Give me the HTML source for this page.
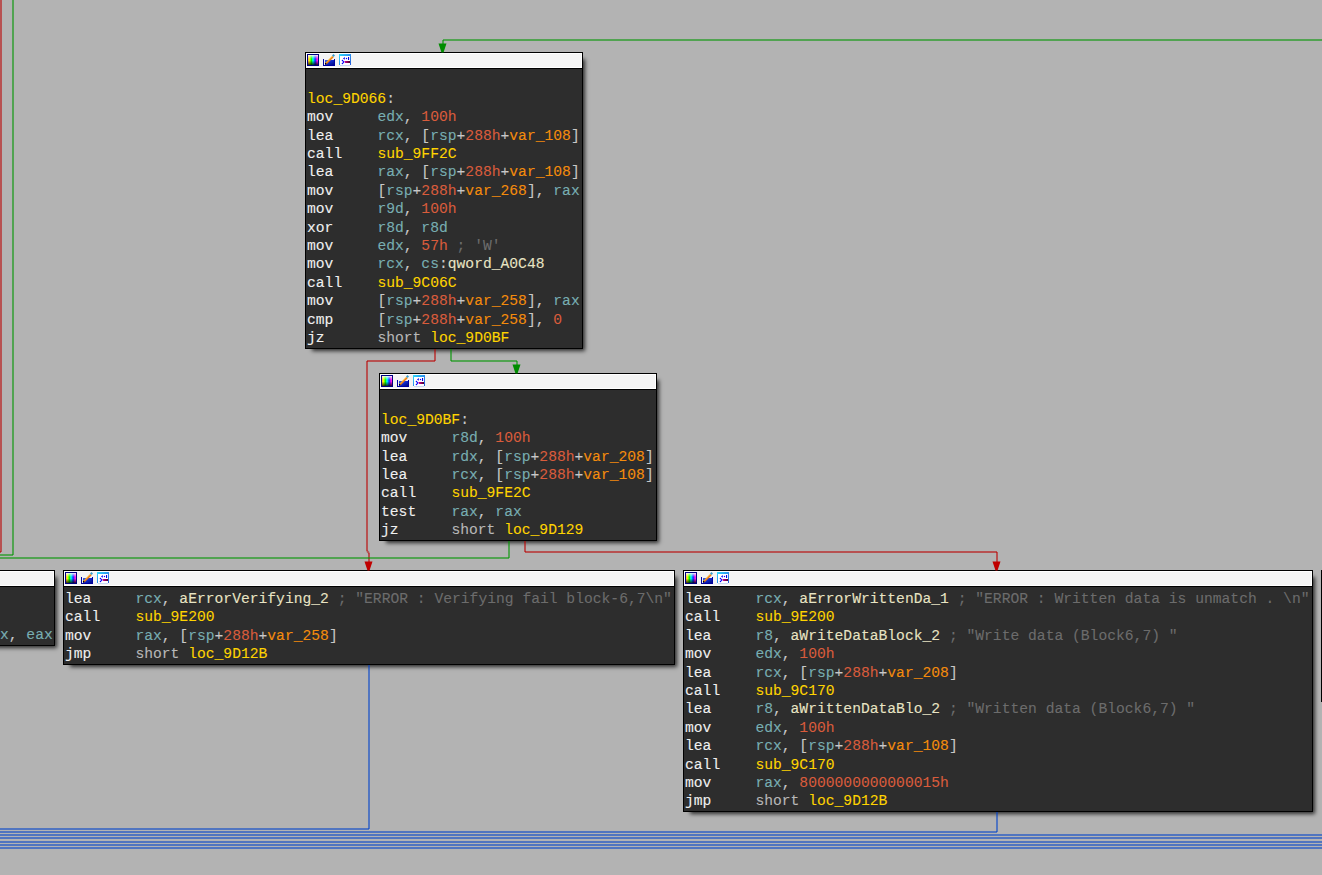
<!DOCTYPE html><html><head><meta charset="utf-8"><style>
html,body{margin:0;padding:0}
body{width:1322px;height:875px;background:#b3b3b3;position:relative;overflow:hidden}
.e{position:absolute}
.eg{background:rgba(0,150,0,0.55)}
.er{background:rgba(185,0,0,0.55)}
.eb{background:rgba(0,65,203,0.55)}
.sl{stroke-width:2}
line.er{stroke:rgba(185,0,0,0.55)}
.ar{position:absolute;overflow:visible}
.nd{position:absolute;box-sizing:border-box;border:1px solid #000;background:#2d2d2d;box-shadow:4.5px 4.5px 4px -2.5px rgba(0,0,0,0.75)}
.tt{height:16px;box-sizing:border-box;background:#f4f4f4;border-bottom:1px solid #000;box-shadow:inset 0 0 0 1px #fff;position:relative}
.ic{position:absolute;left:0px;top:0px}
.bd{margin:0;padding:0 0 0 1px;font-family:"Liberation Mono",monospace;font-size:14.667px;line-height:18.4px;color:#f0f0f0;white-space:pre;position:relative;top:2.4px;-webkit-text-stroke:0.1px currentColor}
i{font-style:normal}
.m{color:#f0f0f0}.r{color:#78aeb2}.n{color:#d95c3c}.v{color:#f48c0c}.l{color:#ffd400}.p{color:#c8c8c8}.c{color:#6c6c6c}.a{color:#e8e4c4}.s{color:#b8b8b8}
</style></head><body><div class="nd" style="left:305px;top:52px;width:278px;height:297px"><div class="tt"><svg class="ic" width="46" height="14" viewBox="0 0 46 14">
<defs>
<linearGradient id="hue" x1="0" y1="0" x2="1" y2="0">
<stop offset="0" stop-color="#ff9060"/><stop offset="0.12" stop-color="#ffff00"/><stop offset="0.35" stop-color="#00ff00"/><stop offset="0.5" stop-color="#00ffff"/><stop offset="0.72" stop-color="#0030ff"/><stop offset="0.9" stop-color="#ff00ff"/><stop offset="1" stop-color="#ff40c0"/></linearGradient>
<linearGradient id="dark" x1="0" y1="0" x2="0" y2="1">
<stop offset="0" stop-color="#fff" stop-opacity="0.95"/><stop offset="0.12" stop-color="#fff" stop-opacity="0.6"/><stop offset="0.4" stop-color="#fff" stop-opacity="0"/><stop offset="0.55" stop-color="#000" stop-opacity="0"/><stop offset="1" stop-color="#000" stop-opacity="0.8"/></linearGradient>
<linearGradient id="bkt" x1="0" y1="0" x2="1" y2="1">
<stop offset="0" stop-color="#3a60e8"/><stop offset="0.5" stop-color="#1028c8"/><stop offset="1" stop-color="#000a80"/></linearGradient>
<linearGradient id="win" x1="0" y1="0" x2="1" y2="1">
<stop offset="0" stop-color="#30e0ff"/><stop offset="0.5" stop-color="#2a90ec"/><stop offset="1" stop-color="#2458d8"/></linearGradient>
<linearGradient id="bar" x1="0" y1="0" x2="1" y2="0">
<stop offset="0" stop-color="#e0009a"/><stop offset="1" stop-color="#40002a"/></linearGradient>
</defs>
<rect x="1" y="1" width="12" height="12" fill="#000080"/>
<rect x="2" y="2" width="10" height="10" fill="url(#hue)"/>
<rect x="2" y="2" width="10" height="10" fill="url(#dark)"/>
<path d="M17 6 h1 v6 h10 v-6 h1 v7 h-12 z" fill="#0000a0"/>
<rect x="19" y="7" width="9" height="5" fill="url(#bkt)"/>
<path d="M19.8 10.8 L27 3.6" stroke="#f07818" stroke-width="1.9"/>
<path d="M19.3 10.3 L26.5 3.1" stroke="#ffd030" stroke-width="0.8"/>
<path d="M27.5 1 L29 2.5 L27.5 4 L26 2.5 z" fill="#3a9ccc"/>
<rect x="19" y="10" width="1.3" height="1.3" fill="#000"/>
<rect x="33" y="1" width="12" height="11" fill="url(#win)"/>
<rect x="34" y="3" width="10" height="9" fill="#fff"/>
<rect x="34" y="12" width="10" height="1" fill="#c8d8f4"/>
<circle cx="36.5" cy="7.5" r="0.8" fill="#0000ff"/><circle cx="37.5" cy="9" r="0.9" fill="#0000ff"/><circle cx="36.5" cy="10.5" r="0.8" fill="#0000ff"/>
<path d="M37 5.5 L38.8 4 L38.8 6.8 z" fill="#0000f0"/>
<circle cx="40.5" cy="5.5" r="0.7" fill="#0000ff"/>
<rect x="42" y="4" width="1.1" height="3" fill="#0000e0"/>
<path d="M38.3 8 L44 8 L44 10 L39.2 10 z" fill="url(#bar)"/>
</svg></div><pre class="bd" style="">

<i class="l">loc_9D066</i><i class="p">:</i>
<i class="m">mov     </i><i class="r">edx</i><i class="p">, </i><i class="n">100h</i>
<i class="m">lea     </i><i class="r">rcx</i><i class="p">, </i><i class="p">[</i><i class="r">rsp</i><i class="p">+</i><i class="n">288h</i><i class="p">+</i><i class="v">var_108</i><i class="p">]</i>
<i class="m">call    </i><i class="l">sub_9FF2C</i>
<i class="m">lea     </i><i class="r">rax</i><i class="p">, </i><i class="p">[</i><i class="r">rsp</i><i class="p">+</i><i class="n">288h</i><i class="p">+</i><i class="v">var_108</i><i class="p">]</i>
<i class="m">mov     </i><i class="p">[</i><i class="r">rsp</i><i class="p">+</i><i class="n">288h</i><i class="p">+</i><i class="v">var_268</i><i class="p">]</i><i class="p">, </i><i class="r">rax</i>
<i class="m">mov     </i><i class="r">r9d</i><i class="p">, </i><i class="n">100h</i>
<i class="m">xor     </i><i class="r">r8d</i><i class="p">, </i><i class="r">r8d</i>
<i class="m">mov     </i><i class="r">edx</i><i class="p">, </i><i class="n">57h</i><i class="c"> ; &#x27;W&#x27;</i>
<i class="m">mov     </i><i class="r">rcx</i><i class="p">, </i><i class="r">cs</i><i class="p">:</i><i class="a">qword_A0C48</i>
<i class="m">call    </i><i class="l">sub_9C06C</i>
<i class="m">mov     </i><i class="p">[</i><i class="r">rsp</i><i class="p">+</i><i class="n">288h</i><i class="p">+</i><i class="v">var_258</i><i class="p">]</i><i class="p">, </i><i class="r">rax</i>
<i class="m">cmp     </i><i class="p">[</i><i class="r">rsp</i><i class="p">+</i><i class="n">288h</i><i class="p">+</i><i class="v">var_258</i><i class="p">]</i><i class="p">, </i><i class="n">0</i>
<i class="m">jz      </i><i class="s">short </i><i class="l">loc_9D0BF</i></pre></div>
<div class="nd" style="left:379px;top:373px;width:278px;height:168px"><div class="tt"><svg class="ic" width="46" height="14" viewBox="0 0 46 14">
<defs>
<linearGradient id="hue" x1="0" y1="0" x2="1" y2="0">
<stop offset="0" stop-color="#ff9060"/><stop offset="0.12" stop-color="#ffff00"/><stop offset="0.35" stop-color="#00ff00"/><stop offset="0.5" stop-color="#00ffff"/><stop offset="0.72" stop-color="#0030ff"/><stop offset="0.9" stop-color="#ff00ff"/><stop offset="1" stop-color="#ff40c0"/></linearGradient>
<linearGradient id="dark" x1="0" y1="0" x2="0" y2="1">
<stop offset="0" stop-color="#fff" stop-opacity="0.95"/><stop offset="0.12" stop-color="#fff" stop-opacity="0.6"/><stop offset="0.4" stop-color="#fff" stop-opacity="0"/><stop offset="0.55" stop-color="#000" stop-opacity="0"/><stop offset="1" stop-color="#000" stop-opacity="0.8"/></linearGradient>
<linearGradient id="bkt" x1="0" y1="0" x2="1" y2="1">
<stop offset="0" stop-color="#3a60e8"/><stop offset="0.5" stop-color="#1028c8"/><stop offset="1" stop-color="#000a80"/></linearGradient>
<linearGradient id="win" x1="0" y1="0" x2="1" y2="1">
<stop offset="0" stop-color="#30e0ff"/><stop offset="0.5" stop-color="#2a90ec"/><stop offset="1" stop-color="#2458d8"/></linearGradient>
<linearGradient id="bar" x1="0" y1="0" x2="1" y2="0">
<stop offset="0" stop-color="#e0009a"/><stop offset="1" stop-color="#40002a"/></linearGradient>
</defs>
<rect x="1" y="1" width="12" height="12" fill="#000080"/>
<rect x="2" y="2" width="10" height="10" fill="url(#hue)"/>
<rect x="2" y="2" width="10" height="10" fill="url(#dark)"/>
<path d="M17 6 h1 v6 h10 v-6 h1 v7 h-12 z" fill="#0000a0"/>
<rect x="19" y="7" width="9" height="5" fill="url(#bkt)"/>
<path d="M19.8 10.8 L27 3.6" stroke="#f07818" stroke-width="1.9"/>
<path d="M19.3 10.3 L26.5 3.1" stroke="#ffd030" stroke-width="0.8"/>
<path d="M27.5 1 L29 2.5 L27.5 4 L26 2.5 z" fill="#3a9ccc"/>
<rect x="19" y="10" width="1.3" height="1.3" fill="#000"/>
<rect x="33" y="1" width="12" height="11" fill="url(#win)"/>
<rect x="34" y="3" width="10" height="9" fill="#fff"/>
<rect x="34" y="12" width="10" height="1" fill="#c8d8f4"/>
<circle cx="36.5" cy="7.5" r="0.8" fill="#0000ff"/><circle cx="37.5" cy="9" r="0.9" fill="#0000ff"/><circle cx="36.5" cy="10.5" r="0.8" fill="#0000ff"/>
<path d="M37 5.5 L38.8 4 L38.8 6.8 z" fill="#0000f0"/>
<circle cx="40.5" cy="5.5" r="0.7" fill="#0000ff"/>
<rect x="42" y="4" width="1.1" height="3" fill="#0000e0"/>
<path d="M38.3 8 L44 8 L44 10 L39.2 10 z" fill="url(#bar)"/>
</svg></div><pre class="bd" style="">

<i class="l">loc_9D0BF</i><i class="p">:</i>
<i class="m">mov     </i><i class="r">r8d</i><i class="p">, </i><i class="n">100h</i>
<i class="m">lea     </i><i class="r">rdx</i><i class="p">, </i><i class="p">[</i><i class="r">rsp</i><i class="p">+</i><i class="n">288h</i><i class="p">+</i><i class="v">var_208</i><i class="p">]</i>
<i class="m">lea     </i><i class="r">rcx</i><i class="p">, </i><i class="p">[</i><i class="r">rsp</i><i class="p">+</i><i class="n">288h</i><i class="p">+</i><i class="v">var_108</i><i class="p">]</i>
<i class="m">call    </i><i class="l">sub_9FE2C</i>
<i class="m">test    </i><i class="r">rax</i><i class="p">, </i><i class="r">rax</i>
<i class="m">jz      </i><i class="s">short </i><i class="l">loc_9D129</i></pre></div>
<div class="nd" style="left:63px;top:570px;width:612px;height:95px"><div class="tt"><svg class="ic" width="46" height="14" viewBox="0 0 46 14">
<defs>
<linearGradient id="hue" x1="0" y1="0" x2="1" y2="0">
<stop offset="0" stop-color="#ff9060"/><stop offset="0.12" stop-color="#ffff00"/><stop offset="0.35" stop-color="#00ff00"/><stop offset="0.5" stop-color="#00ffff"/><stop offset="0.72" stop-color="#0030ff"/><stop offset="0.9" stop-color="#ff00ff"/><stop offset="1" stop-color="#ff40c0"/></linearGradient>
<linearGradient id="dark" x1="0" y1="0" x2="0" y2="1">
<stop offset="0" stop-color="#fff" stop-opacity="0.95"/><stop offset="0.12" stop-color="#fff" stop-opacity="0.6"/><stop offset="0.4" stop-color="#fff" stop-opacity="0"/><stop offset="0.55" stop-color="#000" stop-opacity="0"/><stop offset="1" stop-color="#000" stop-opacity="0.8"/></linearGradient>
<linearGradient id="bkt" x1="0" y1="0" x2="1" y2="1">
<stop offset="0" stop-color="#3a60e8"/><stop offset="0.5" stop-color="#1028c8"/><stop offset="1" stop-color="#000a80"/></linearGradient>
<linearGradient id="win" x1="0" y1="0" x2="1" y2="1">
<stop offset="0" stop-color="#30e0ff"/><stop offset="0.5" stop-color="#2a90ec"/><stop offset="1" stop-color="#2458d8"/></linearGradient>
<linearGradient id="bar" x1="0" y1="0" x2="1" y2="0">
<stop offset="0" stop-color="#e0009a"/><stop offset="1" stop-color="#40002a"/></linearGradient>
</defs>
<rect x="1" y="1" width="12" height="12" fill="#000080"/>
<rect x="2" y="2" width="10" height="10" fill="url(#hue)"/>
<rect x="2" y="2" width="10" height="10" fill="url(#dark)"/>
<path d="M17 6 h1 v6 h10 v-6 h1 v7 h-12 z" fill="#0000a0"/>
<rect x="19" y="7" width="9" height="5" fill="url(#bkt)"/>
<path d="M19.8 10.8 L27 3.6" stroke="#f07818" stroke-width="1.9"/>
<path d="M19.3 10.3 L26.5 3.1" stroke="#ffd030" stroke-width="0.8"/>
<path d="M27.5 1 L29 2.5 L27.5 4 L26 2.5 z" fill="#3a9ccc"/>
<rect x="19" y="10" width="1.3" height="1.3" fill="#000"/>
<rect x="33" y="1" width="12" height="11" fill="url(#win)"/>
<rect x="34" y="3" width="10" height="9" fill="#fff"/>
<rect x="34" y="12" width="10" height="1" fill="#c8d8f4"/>
<circle cx="36.5" cy="7.5" r="0.8" fill="#0000ff"/><circle cx="37.5" cy="9" r="0.9" fill="#0000ff"/><circle cx="36.5" cy="10.5" r="0.8" fill="#0000ff"/>
<path d="M37 5.5 L38.8 4 L38.8 6.8 z" fill="#0000f0"/>
<circle cx="40.5" cy="5.5" r="0.7" fill="#0000ff"/>
<rect x="42" y="4" width="1.1" height="3" fill="#0000e0"/>
<path d="M38.3 8 L44 8 L44 10 L39.2 10 z" fill="url(#bar)"/>
</svg></div><pre class="bd" style="top:3px">
<i class="m">lea     </i><i class="r">rcx</i><i class="p">, </i><i class="a">aErrorVerifying_2</i><i class="c"> ; &quot;ERROR : Verifying fail block-6,7\n&quot;</i>
<i class="m">call    </i><i class="l">sub_9E200</i>
<i class="m">mov     </i><i class="r">rax</i><i class="p">, </i><i class="p">[</i><i class="r">rsp</i><i class="p">+</i><i class="n">288h</i><i class="p">+</i><i class="v">var_258</i><i class="p">]</i>
<i class="m">jmp     </i><i class="s">short </i><i class="l">loc_9D12B</i></pre></div>
<div class="nd" style="left:683px;top:570px;width:630px;height:242px"><div class="tt"><svg class="ic" width="46" height="14" viewBox="0 0 46 14">
<defs>
<linearGradient id="hue" x1="0" y1="0" x2="1" y2="0">
<stop offset="0" stop-color="#ff9060"/><stop offset="0.12" stop-color="#ffff00"/><stop offset="0.35" stop-color="#00ff00"/><stop offset="0.5" stop-color="#00ffff"/><stop offset="0.72" stop-color="#0030ff"/><stop offset="0.9" stop-color="#ff00ff"/><stop offset="1" stop-color="#ff40c0"/></linearGradient>
<linearGradient id="dark" x1="0" y1="0" x2="0" y2="1">
<stop offset="0" stop-color="#fff" stop-opacity="0.95"/><stop offset="0.12" stop-color="#fff" stop-opacity="0.6"/><stop offset="0.4" stop-color="#fff" stop-opacity="0"/><stop offset="0.55" stop-color="#000" stop-opacity="0"/><stop offset="1" stop-color="#000" stop-opacity="0.8"/></linearGradient>
<linearGradient id="bkt" x1="0" y1="0" x2="1" y2="1">
<stop offset="0" stop-color="#3a60e8"/><stop offset="0.5" stop-color="#1028c8"/><stop offset="1" stop-color="#000a80"/></linearGradient>
<linearGradient id="win" x1="0" y1="0" x2="1" y2="1">
<stop offset="0" stop-color="#30e0ff"/><stop offset="0.5" stop-color="#2a90ec"/><stop offset="1" stop-color="#2458d8"/></linearGradient>
<linearGradient id="bar" x1="0" y1="0" x2="1" y2="0">
<stop offset="0" stop-color="#e0009a"/><stop offset="1" stop-color="#40002a"/></linearGradient>
</defs>
<rect x="1" y="1" width="12" height="12" fill="#000080"/>
<rect x="2" y="2" width="10" height="10" fill="url(#hue)"/>
<rect x="2" y="2" width="10" height="10" fill="url(#dark)"/>
<path d="M17 6 h1 v6 h10 v-6 h1 v7 h-12 z" fill="#0000a0"/>
<rect x="19" y="7" width="9" height="5" fill="url(#bkt)"/>
<path d="M19.8 10.8 L27 3.6" stroke="#f07818" stroke-width="1.9"/>
<path d="M19.3 10.3 L26.5 3.1" stroke="#ffd030" stroke-width="0.8"/>
<path d="M27.5 1 L29 2.5 L27.5 4 L26 2.5 z" fill="#3a9ccc"/>
<rect x="19" y="10" width="1.3" height="1.3" fill="#000"/>
<rect x="33" y="1" width="12" height="11" fill="url(#win)"/>
<rect x="34" y="3" width="10" height="9" fill="#fff"/>
<rect x="34" y="12" width="10" height="1" fill="#c8d8f4"/>
<circle cx="36.5" cy="7.5" r="0.8" fill="#0000ff"/><circle cx="37.5" cy="9" r="0.9" fill="#0000ff"/><circle cx="36.5" cy="10.5" r="0.8" fill="#0000ff"/>
<path d="M37 5.5 L38.8 4 L38.8 6.8 z" fill="#0000f0"/>
<circle cx="40.5" cy="5.5" r="0.7" fill="#0000ff"/>
<rect x="42" y="4" width="1.1" height="3" fill="#0000e0"/>
<path d="M38.3 8 L44 8 L44 10 L39.2 10 z" fill="url(#bar)"/>
</svg></div><pre class="bd" style="top:3px">
<i class="m">lea     </i><i class="r">rcx</i><i class="p">, </i><i class="a">aErrorWrittenDa_1</i><i class="c"> ; &quot;ERROR : Written data is unmatch . \n&quot;</i>
<i class="m">call    </i><i class="l">sub_9E200</i>
<i class="m">lea     </i><i class="r">r8</i><i class="p">, </i><i class="a">aWriteDataBlock_2</i><i class="c"> ; &quot;Write data (Block6,7) &quot;</i>
<i class="m">mov     </i><i class="r">edx</i><i class="p">, </i><i class="n">100h</i>
<i class="m">lea     </i><i class="r">rcx</i><i class="p">, </i><i class="p">[</i><i class="r">rsp</i><i class="p">+</i><i class="n">288h</i><i class="p">+</i><i class="v">var_208</i><i class="p">]</i>
<i class="m">call    </i><i class="l">sub_9C170</i>
<i class="m">lea     </i><i class="r">r8</i><i class="p">, </i><i class="a">aWrittenDataBlo_2</i><i class="c"> ; &quot;Written data (Block6,7) &quot;</i>
<i class="m">mov     </i><i class="r">edx</i><i class="p">, </i><i class="n">100h</i>
<i class="m">lea     </i><i class="r">rcx</i><i class="p">, </i><i class="p">[</i><i class="r">rsp</i><i class="p">+</i><i class="n">288h</i><i class="p">+</i><i class="v">var_108</i><i class="p">]</i>
<i class="m">call    </i><i class="l">sub_9C170</i>
<i class="m">mov     </i><i class="r">rax</i><i class="p">, </i><i class="n">8000000000000015h</i>
<i class="m">jmp     </i><i class="s">short </i><i class="l">loc_9D12B</i></pre></div>
<div class="nd" style="left:-90px;top:570px;width:145px;height:76px"><div class="tt"><svg class="ic" width="46" height="14" viewBox="0 0 46 14">
<defs>
<linearGradient id="hue" x1="0" y1="0" x2="1" y2="0">
<stop offset="0" stop-color="#ff9060"/><stop offset="0.12" stop-color="#ffff00"/><stop offset="0.35" stop-color="#00ff00"/><stop offset="0.5" stop-color="#00ffff"/><stop offset="0.72" stop-color="#0030ff"/><stop offset="0.9" stop-color="#ff00ff"/><stop offset="1" stop-color="#ff40c0"/></linearGradient>
<linearGradient id="dark" x1="0" y1="0" x2="0" y2="1">
<stop offset="0" stop-color="#fff" stop-opacity="0.95"/><stop offset="0.12" stop-color="#fff" stop-opacity="0.6"/><stop offset="0.4" stop-color="#fff" stop-opacity="0"/><stop offset="0.55" stop-color="#000" stop-opacity="0"/><stop offset="1" stop-color="#000" stop-opacity="0.8"/></linearGradient>
<linearGradient id="bkt" x1="0" y1="0" x2="1" y2="1">
<stop offset="0" stop-color="#3a60e8"/><stop offset="0.5" stop-color="#1028c8"/><stop offset="1" stop-color="#000a80"/></linearGradient>
<linearGradient id="win" x1="0" y1="0" x2="1" y2="1">
<stop offset="0" stop-color="#30e0ff"/><stop offset="0.5" stop-color="#2a90ec"/><stop offset="1" stop-color="#2458d8"/></linearGradient>
<linearGradient id="bar" x1="0" y1="0" x2="1" y2="0">
<stop offset="0" stop-color="#e0009a"/><stop offset="1" stop-color="#40002a"/></linearGradient>
</defs>
<rect x="1" y="1" width="12" height="12" fill="#000080"/>
<rect x="2" y="2" width="10" height="10" fill="url(#hue)"/>
<rect x="2" y="2" width="10" height="10" fill="url(#dark)"/>
<path d="M17 6 h1 v6 h10 v-6 h1 v7 h-12 z" fill="#0000a0"/>
<rect x="19" y="7" width="9" height="5" fill="url(#bkt)"/>
<path d="M19.8 10.8 L27 3.6" stroke="#f07818" stroke-width="1.9"/>
<path d="M19.3 10.3 L26.5 3.1" stroke="#ffd030" stroke-width="0.8"/>
<path d="M27.5 1 L29 2.5 L27.5 4 L26 2.5 z" fill="#3a9ccc"/>
<rect x="19" y="10" width="1.3" height="1.3" fill="#000"/>
<rect x="33" y="1" width="12" height="11" fill="url(#win)"/>
<rect x="34" y="3" width="10" height="9" fill="#fff"/>
<rect x="34" y="12" width="10" height="1" fill="#c8d8f4"/>
<circle cx="36.5" cy="7.5" r="0.8" fill="#0000ff"/><circle cx="37.5" cy="9" r="0.9" fill="#0000ff"/><circle cx="36.5" cy="10.5" r="0.8" fill="#0000ff"/>
<path d="M37 5.5 L38.8 4 L38.8 6.8 z" fill="#0000f0"/>
<circle cx="40.5" cy="5.5" r="0.7" fill="#0000ff"/>
<rect x="42" y="4" width="1.1" height="3" fill="#0000e0"/>
<path d="M38.3 8 L44 8 L44 10 L39.2 10 z" fill="url(#bar)"/>
</svg></div><pre class="bd" style="top:2.2px">


<i class="m">mov     </i><i class="r">ecx</i><i class="p">, </i><i class="r">eax</i></pre></div>
<div class="nd" style="left:1321px;top:570px;width:380px;height:132px"><div class="tt"><svg class="ic" width="46" height="14" viewBox="0 0 46 14">
<defs>
<linearGradient id="hue" x1="0" y1="0" x2="1" y2="0">
<stop offset="0" stop-color="#ff9060"/><stop offset="0.12" stop-color="#ffff00"/><stop offset="0.35" stop-color="#00ff00"/><stop offset="0.5" stop-color="#00ffff"/><stop offset="0.72" stop-color="#0030ff"/><stop offset="0.9" stop-color="#ff00ff"/><stop offset="1" stop-color="#ff40c0"/></linearGradient>
<linearGradient id="dark" x1="0" y1="0" x2="0" y2="1">
<stop offset="0" stop-color="#fff" stop-opacity="0.95"/><stop offset="0.12" stop-color="#fff" stop-opacity="0.6"/><stop offset="0.4" stop-color="#fff" stop-opacity="0"/><stop offset="0.55" stop-color="#000" stop-opacity="0"/><stop offset="1" stop-color="#000" stop-opacity="0.8"/></linearGradient>
<linearGradient id="bkt" x1="0" y1="0" x2="1" y2="1">
<stop offset="0" stop-color="#3a60e8"/><stop offset="0.5" stop-color="#1028c8"/><stop offset="1" stop-color="#000a80"/></linearGradient>
<linearGradient id="win" x1="0" y1="0" x2="1" y2="1">
<stop offset="0" stop-color="#30e0ff"/><stop offset="0.5" stop-color="#2a90ec"/><stop offset="1" stop-color="#2458d8"/></linearGradient>
<linearGradient id="bar" x1="0" y1="0" x2="1" y2="0">
<stop offset="0" stop-color="#e0009a"/><stop offset="1" stop-color="#40002a"/></linearGradient>
</defs>
<rect x="1" y="1" width="12" height="12" fill="#000080"/>
<rect x="2" y="2" width="10" height="10" fill="url(#hue)"/>
<rect x="2" y="2" width="10" height="10" fill="url(#dark)"/>
<path d="M17 6 h1 v6 h10 v-6 h1 v7 h-12 z" fill="#0000a0"/>
<rect x="19" y="7" width="9" height="5" fill="url(#bkt)"/>
<path d="M19.8 10.8 L27 3.6" stroke="#f07818" stroke-width="1.9"/>
<path d="M19.3 10.3 L26.5 3.1" stroke="#ffd030" stroke-width="0.8"/>
<path d="M27.5 1 L29 2.5 L27.5 4 L26 2.5 z" fill="#3a9ccc"/>
<rect x="19" y="10" width="1.3" height="1.3" fill="#000"/>
<rect x="33" y="1" width="12" height="11" fill="url(#win)"/>
<rect x="34" y="3" width="10" height="9" fill="#fff"/>
<rect x="34" y="12" width="10" height="1" fill="#c8d8f4"/>
<circle cx="36.5" cy="7.5" r="0.8" fill="#0000ff"/><circle cx="37.5" cy="9" r="0.9" fill="#0000ff"/><circle cx="36.5" cy="10.5" r="0.8" fill="#0000ff"/>
<path d="M37 5.5 L38.8 4 L38.8 6.8 z" fill="#0000f0"/>
<circle cx="40.5" cy="5.5" r="0.7" fill="#0000ff"/>
<rect x="42" y="4" width="1.1" height="3" fill="#0000e0"/>
<path d="M38.3 8 L44 8 L44 10 L39.2 10 z" fill="url(#bar)"/>
</svg></div><pre class="bd" style="">
</pre></div>
<div class="e er" style="left:0px;top:-5px;width:2px;height:557px"></div>
<div class="e er" style="left:-5px;top:551px;width:6px;height:2px"></div>
<div class="e er" style="left:434px;top:349px;width:2px;height:12px"></div>
<div class="e er" style="left:367px;top:360px;width:68px;height:2px"></div>
<div class="e er" style="left:366px;top:361px;width:2px;height:190px"></div>
<svg class="ar" style="left:0;top:0" width="1322" height="875"><line x1="367" y1="551" x2="369" y2="553" class="sl er"/></svg>
<div class="e er" style="left:368px;top:553px;width:2px;height:9px"></div>
<svg class="ar" style="left:364px;top:561px" width="10" height="10"><path d="M0.5 0.5 L8.5 0.5 L5.5 9.5 L3.5 9.5 z" fill="#c00000"/></svg>
<div class="e er" style="left:524px;top:541px;width:2px;height:11px"></div>
<div class="e er" style="left:525px;top:551px;width:472px;height:2px"></div>
<div class="e er" style="left:996px;top:552px;width:2px;height:10px"></div>
<svg class="ar" style="left:992px;top:561px" width="10" height="10"><path d="M0.5 0.5 L8.5 0.5 L5.5 9.5 L3.5 9.5 z" fill="#c00000"/></svg>
<div class="e eg" style="left:443px;top:39px;width:887px;height:2px"></div>
<div class="e eg" style="left:442px;top:40px;width:2px;height:4px"></div>
<svg class="ar" style="left:438px;top:43px" width="10" height="10"><path d="M0.5 0.5 L8.5 0.5 L5.5 9.5 L3.5 9.5 z" fill="#008c00"/></svg>
<div class="e eg" style="left:450px;top:349px;width:2px;height:12px"></div>
<div class="e eg" style="left:451px;top:360px;width:66px;height:2px"></div>
<div class="e eg" style="left:516px;top:361px;width:2px;height:4px"></div>
<svg class="ar" style="left:512px;top:364px" width="10" height="10"><path d="M0.5 0.5 L8.5 0.5 L5.5 9.5 L3.5 9.5 z" fill="#008c00"/></svg>
<div class="e eg" style="left:12px;top:-5px;width:2px;height:560px"></div>
<div class="e eg" style="left:-5px;top:554px;width:18px;height:2px"></div>
<div class="e eg" style="left:508px;top:541px;width:2px;height:17px"></div>
<div class="e eg" style="left:-5px;top:557px;width:514px;height:2px"></div>
<div class="e eb" style="left:368px;top:665px;width:2px;height:164px"></div>
<div class="e eb" style="left:-5px;top:828px;width:374px;height:2px"></div>
<div class="e eb" style="left:996px;top:812px;width:2px;height:20px"></div>
<div class="e eb" style="left:-5px;top:831px;width:1002px;height:2px"></div>
<div class="e eb" style="left:-5px;top:834px;width:1335px;height:2px"></div>
<div class="e eb" style="left:-5px;top:837px;width:1335px;height:2px"></div>
<div class="e eb" style="left:-5px;top:841px;width:1335px;height:2px"></div>
<div class="e eb" style="left:-5px;top:844px;width:1335px;height:2px"></div>
<div class="e eb" style="left:-5px;top:847px;width:1335px;height:2px"></div></body></html>
